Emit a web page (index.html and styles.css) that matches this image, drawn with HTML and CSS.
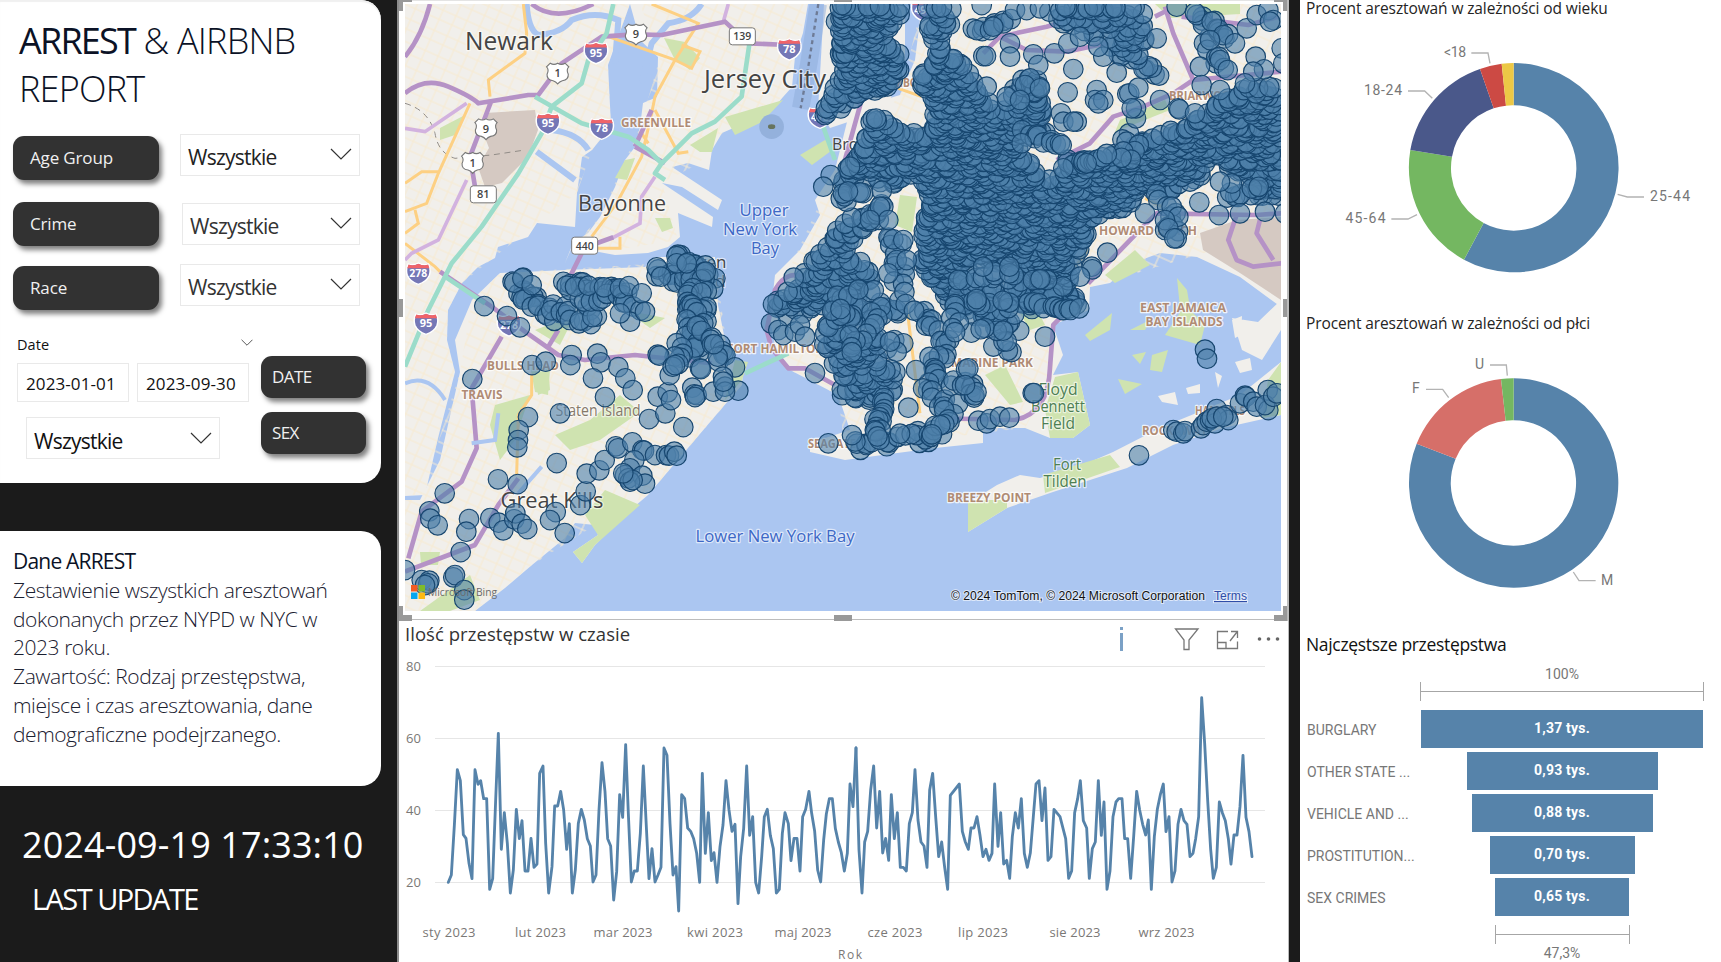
FILE: index.html
```html
<!DOCTYPE html>
<html lang="pl">
<head>
<meta charset="utf-8">
<title>Arrest &amp; Airbnb Report</title>
<link rel="stylesheet" href="styles.css">
</head>
<body>
<div class="report">
  <aside class="sidebar">
    <section class="card filters">
      <h1 class="title"><b>ARREST</b> &amp; AIRBNB<br>REPORT</h1>
      <div class="filter filter-age">
        <div class="tag">Age Group</div>
        <div class="select strong"><span>Wszystkie</span><svg class="chevron" viewBox="0 0 22 12"><path d="M1 1l10 10L21 1"/></svg></div>
      </div>
      <div class="filter filter-crime">
        <div class="tag">Crime</div>
        <div class="select"><span>Wszystkie</span><svg class="chevron" viewBox="0 0 22 12"><path d="M1 1l10 10L21 1"/></svg></div>
      </div>
      <div class="filter filter-race">
        <div class="tag">Race</div>
        <div class="select"><span>Wszystkie</span><svg class="chevron" viewBox="0 0 22 12"><path d="M1 1l10 10L21 1"/></svg></div>
      </div>
      <div class="bottom">
        <div class="dates">
          <div class="date-head"><span>Date</span><svg class="chevron small" viewBox="0 0 22 12"><path d="M1 1l10 10L21 1"/></svg></div>
          <div class="date-row"><div class="date">2023-01-01</div><div class="date">2023-09-30</div></div>
          <div class="select sex"><span>Wszystkie</span><svg class="chevron" viewBox="0 0 22 12"><path d="M1 1l10 10L21 1"/></svg></div>
        </div>
        <div class="tags"><div class="tag mini">DATE</div><div class="tag mini">SEX</div></div>
      </div>
    </section>
    <section class="card about">
      <p class="about-head">Dane ARREST</p>
      <p>Zestawienie wszystkich aresztowań</p>
      <p>dokonanych przez NYPD w NYC w</p>
      <p>2023 roku.</p>
      <p>Zawartość: Rodzaj przestępstwa,</p>
      <p>miejsce i czas aresztowania, dane</p>
      <p>demograficzne podejrzanego.</p>
    </section>
    <div class="stamp">2024-09-19 17:33:10</div>
    <div class="stamp-label">LAST UPDATE</div>
  </aside>

  <main class="center">
    <svg class="map" viewBox="399 0 889 621" width="889" height="621">
      <defs>
        <clipPath id="frame"><rect x="405" y="4" width="876" height="607"/></clipPath>
        <pattern id="streets" width="26" height="22" patternUnits="userSpaceOnUse" patternTransform="rotate(24)">
          <path d="M0 5H26M0 15H26M7 0V22M19 0V22" stroke="#f7ead0" stroke-width="1" fill="none"/>
        </pattern>
        <symbol id="inter" viewBox="0 0 26 26" overflow="visible">
          <path d="M2 3Q7 5 13 2Q19 5 24 3Q27 9 25 15Q22 22 13 25Q4 22 1 15Q-1 9 2 3Z" fill="#7477b6" stroke="#fff" stroke-width="1.6"/>
          <path d="M2.4 3.4Q7 5.4 13 2.6Q19 5.4 23.6 3.4L25 7.4H1Z" fill="#f06469"/>
        </symbol>
        <symbol id="usr" viewBox="0 0 26 26" overflow="visible">
          <path d="M5 2Q9 4.500 13 2Q17 4.500 21 2L25 6Q22 9 24.500 14Q25 20 18 21Q15 22 13 24.500Q11 22 8 21Q1 20 1.500 14Q4 9 1 6Z" fill="#fff" stroke="#777" stroke-width="1.200"/>
        </symbol>
      </defs>
      <rect x="399" y="0" width="889" height="621" fill="#fff"/>
      <g clip-path="url(#frame)">
        <rect x="405" y="4" width="876" height="607" fill="#abc6f1"/>
        <g id="land">
          <path d="M405 4H630L608 65L611 126L592 150L582 157L577 193L575 227L537 223L528 237L498 247L495 258L478 267L462 283L448 310L447 340L455 372L438 438L425 495L405 496Z"/>
          <path d="M630 4H808L803 33L795 57L792 87L783 97L772 110L745 123L722 133L712 150L709 170L688 163L672 167L722 200L718 210L682 187L662 183L713 217L712 227L678 213L680 237L668 247L648 253L615 255L572 247L565 263L573 243L588 233L600 217L615 187L625 160L635 147L640 127L643 103L657 97L658 57L640 40Z"/>
          <path d="M472 300L500 273L565 270L645 267L655 257L715 257L718 305L728 355L743 372L742 385L722 408L688 448L648 495L628 512L595 545L582 563L573 552L598 535L595 525L575 523L565 538L532 565L505 588L475 611H405V500H420L440 460L460 372L455 340Z"/>
          <path d="M824 4H905V60L890 100L860 118L830 128L818 110Z"/>
          <path d="M922 4H1281V307L1240 277L1197 257L1160 253L1133 263L1110 283L1090 287L1089 310L1053 325L1063 355L1053 375L1078 372L1090 425L1073 438H1050L1025 428H983V443L935 448L845 460L810 452V443L850 430L838 395L790 370L775 345L770 320L775 275L800 250L820 215L815 200L835 170L850 110L900 95L915 60Z"/>
          <path d="M1281 362L1240 395L1160 428L1113 452L1083 465L1040 478L1020 475L997 485L970 502L968 532L1007 508L1053 492L1127 468L1173 445L1223 428L1281 415Z"/>
          <path d="M1232 318L1258 322L1281 300V330L1262 360L1242 350ZM1235 362L1250 358L1252 370L1240 373ZM1215 372L1222 376L1218 388ZM1158 396L1175 392L1178 405L1162 402ZM1186 388L1200 384L1200 393L1188 394ZM1232 320L1242 316L1241 335L1235 338Z"/>
        </g>
        <g fill="url(#streets)">
          <path d="M405 4H630L608 65L611 126L592 150L577 193L537 223L462 283L448 310L447 340L455 372L438 438L425 495H405ZM640 4H808L783 97L712 140L700 163L662 183L678 240L615 250L572 247L600 217L640 127L660 57ZM472 300L500 273L715 260L728 355L742 385L648 495L595 525L532 565L475 611H405V500H420L460 372ZM922 4H1281V230L1090 287L1053 325L1053 375L1025 428L845 450L838 395L790 370L775 300L835 170L900 95Z"/>
        </g>
        <g fill="#cfe3b0">
          <path d="M725 117L783 100L762 122L735 135ZM690 145L718 128L712 152L700 152ZM664 38L685 42L700 58L690 70L674 58ZM800 155L825 140L835 148L812 165ZM625 160L635 158L627 180L615 178ZM440 128L465 115L455 135L440 140ZM655 218L670 218L673 228L662 232Z"/>
          <path d="M530 365L550 370L548 395L535 392ZM495 405L530 395L515 440L500 460L490 425ZM555 435L590 420L620 395L640 412L600 440L570 450ZM605 490L640 505L595 545L582 563L573 552L598 535L585 515ZM535 330L575 315L560 345ZM625 310L665 318L650 328ZM735 360L748 362L742 380L725 400ZM420 552L440 552L438 565H421ZM470 575L480 600L450 611H420ZM535 370L548 365L550 390L538 395Z"/>
          <path d="M900 195L917 197L912 232L895 225ZM1120 120L1165 100L1170 110L1115 132ZM1105 275L1135 250L1150 265L1115 283ZM1055 377L1078 372L1090 425L1073 438H1050L1045 410ZM1085 335L1112 313L1110 330L1090 341ZM1130 330L1150 320L1145 330ZM1132 355L1146 352L1140 364ZM1152 355L1168 350L1162 372L1150 370ZM1118 379L1142 384L1125 394ZM968 500L1007 500L1007 508L968 532ZM1043 475L1110 455L1120 467L1045 493ZM1155 4H1240V14L1170 18ZM1165 335L1185 305L1205 325L1200 345ZM985 375L1005 365L1023 402L1010 405ZM1268 380L1281 362V415L1262 418ZM1015 305H1035L1045 325L1030 330ZM1177 278L1187 290L1190 308H1180Z"/>
        </g>
        <path d="M485 113L535 110L538 130L528 157L502 183L485 187L478 167L489 148L482 130ZM1200 233L1237 220L1281 217V300L1240 273L1203 250Z" fill="#d5c9c2"/>
        <g transform="translate(395) scale(.3333)" fill="none">
          <path d="M425 455L540 540M470 390Q550 400 580 450M395 12Q400 90 430 105Q500 100 530 60Q600 30 670 60L660 190M920 12Q890 60 820 70L770 130L740 250" stroke="#abc6f1" stroke-width="18"/>
          <path d="M30 310Q100 330 120 400Q130 460 180 475L290 465L390 450" stroke="#918c87" stroke-width="3" stroke-dasharray="18 14"/>
          <path d="M1270 12L1240 200L1217 325" stroke="#8eabd9" stroke-width="52" opacity=".5"/>
          <path d="M1270 12L1240 200L1217 325" stroke="#6e7b96" stroke-width="7" stroke-dasharray="12 10"/>
          <circle cx="1130" cy="380" r="37" fill="#94b1dc"/><ellipse cx="1130" cy="380" rx="11" ry="7" fill="#67745e"/>
          <g stroke="#fdd083" stroke-width="9">
            <path d="M385 12L395 100L390 160L280 240L285 290M225 310L130 520L95 610L30 635M30 550L80 515L130 515M60 630L70 670L30 700M640 110L840 180L910 70L770 12M840 180L890 205L915 155L860 135M840 180L780 290L770 340L740 470L665 610L590 710M780 330L850 460L880 455M740 400L760 430M30 730L120 800L135 815M600 745H675V710"/>
            <path d="M410 1125V1185L370 1245L365 1425"/>
            <path d="M1535 915L1575 1240M1510 265L1580 290M2250 595L2300 620M2040 800L2080 750"/>
          </g>
          <g stroke="#d2b2df" stroke-width="11">
            <path d="M215 310L90 395L30 385M215 540L130 720L50 760L30 780M650 715L735 670L740 590L780 530M1000 12L985 65"/>
          </g>
          <g stroke="#b592c6" stroke-width="14" stroke-linejoin="round">
            <path d="M30 280Q90 230 160 260T250 310L400 285L430 285L500 190L620 110L720 103L800 105L990 65L1060 130L1180 135M410 12Q480 70 595 12M105 12Q80 110 30 170M290 300L225 470L240 560M605 730L655 712M560 760L525 830M135 815L290 920M720 440L810 490M720 440L770 330" />
            <path d="M320 1010L230 1165L245 1345L200 1445L80 1535L40 1675M30 1715L240 1635L310 1515L370 1435M390 995L490 1065L570 1080L720 1065L950 1090M460 1040L490 990M290 920L390 995"/>
            <path d="M1240 840Q1180 800 1140 870L1115 990L1130 1045L1180 1105L1230 1105L1320 1155"/>
            <path d="M1765 160L1815 110L1955 80L2165 20M1815 110L1895 150L2015 155L2135 130M2280 50L2320 30M2310 20L2335 100L2395 240L2660 215M1985 480L2085 430L2155 350L2245 320L2335 280L2395 240M2360 50L2560 75L2650 50M2080 850L2235 690L2285 640L2585 645L2660 640M2525 645L2500 720L2525 780L2575 800L2660 790M2595 660L2585 700L2635 780M2485 400L2515 530M2035 915L1975 975L1965 1105Q1960 1240 1860 1260L1635 1255M1400 300L1350 480"/>
          </g>
          <g stroke="#9bdcca" stroke-width="14" stroke-linejoin="round">
            <path d="M655 12L635 100L580 180L560 250L470 320L440 400L370 520L260 680L170 790L100 930L30 1100M420 290L560 370L700 410L760 450L800 490L780 520L810 540M800 490L890 400L960 365L1040 290L1065 120M1285 380L1320 480M1050 1120L1180 1060M150 830L270 910"/>
          </g>
          <path d="M30 1150Q100 1120 150 1200M230 1330L300 1320L310 1240M370 1480L440 1400" stroke="#abc6f1" stroke-width="12"/>
        </g>
        <g id="shields"></g>
        <g class="place" text-anchor="middle">
          <text x="509" y="50" font-size="25" textLength="88" lengthAdjust="spacingAndGlyphs">Newark</text>
          <text x="765" y="88" font-size="25" textLength="122" lengthAdjust="spacingAndGlyphs">Jersey City</text>
          <text x="622" y="211" font-size="22" textLength="88" lengthAdjust="spacingAndGlyphs">Bayonne</text>
          <text x="552" y="508" font-size="21.500" textLength="103" lengthAdjust="spacingAndGlyphs">Great Kills</text>
          <text x="701" y="268" font-size="17">Staten</text><text x="702" y="287" font-size="17">Island</text>
          <text x="865" y="150" font-size="17" textLength="66" lengthAdjust="spacingAndGlyphs">Brooklyn</text>
          <text x="598" y="416" font-size="15.500" fill="#85796b" textLength="85" lengthAdjust="spacingAndGlyphs">Staten Island</text>
          <g fill="#3d68c6" font-size="17">
            <text x="764" y="216" textLength="49" lengthAdjust="spacingAndGlyphs">Upper</text><text x="760" y="235" textLength="74" lengthAdjust="spacingAndGlyphs">New York</text><text x="765" y="254" textLength="28" lengthAdjust="spacingAndGlyphs">Bay</text>
            <text x="775" y="542" textLength="159" lengthAdjust="spacingAndGlyphs">Lower New York Bay</text>
          </g>
          <g fill="#4d7f54" font-size="16">
            <text x="1058" y="395" textLength="39" lengthAdjust="spacingAndGlyphs">Floyd</text><text x="1058" y="412" textLength="54" lengthAdjust="spacingAndGlyphs">Bennett</text><text x="1058" y="429" textLength="34" lengthAdjust="spacingAndGlyphs">Field</text>
            <text x="1067" y="470" textLength="28" lengthAdjust="spacingAndGlyphs">Fort</text><text x="1065" y="487" textLength="43" lengthAdjust="spacingAndGlyphs">Tilden</text>
          </g>
          <g class="district" font-size="12.500">
            <text x="656" y="127" textLength="70" lengthAdjust="spacingAndGlyphs">GREENVILLE</text>
            <text x="523" y="370" textLength="72" lengthAdjust="spacingAndGlyphs">BULLS HEAD</text>
            <text x="482" y="399" textLength="41" lengthAdjust="spacingAndGlyphs">TRAVIS</text>
            <text x="776" y="353" textLength="98" lengthAdjust="spacingAndGlyphs">FORT HAMILTON</text>
            <text x="832" y="448" textLength="48" lengthAdjust="spacingAndGlyphs">SEAGATE</text>
            <text x="1148" y="235" textLength="98" lengthAdjust="spacingAndGlyphs">HOWARD BEACH</text>
            <text x="1183" y="312" textLength="86" lengthAdjust="spacingAndGlyphs">EAST JAMAICA</text>
            <text x="1184" y="326" textLength="77" lengthAdjust="spacingAndGlyphs">BAY ISLANDS</text>
            <text x="992" y="367" textLength="82" lengthAdjust="spacingAndGlyphs">MARINE PARK</text>
            <text x="989" y="502" textLength="84" lengthAdjust="spacingAndGlyphs">BREEZY POINT</text>
            <text x="1175" y="435" textLength="66" lengthAdjust="spacingAndGlyphs">ROCKAWAY</text>
            <text x="1220" y="415" textLength="50" lengthAdjust="spacingAndGlyphs">HAMMELS</text>
            <text x="1204" y="100" textLength="70" lengthAdjust="spacingAndGlyphs">BRIARWOOD</text>
            <text x="898" y="87" textLength="40" lengthAdjust="spacingAndGlyphs">DUMBO</text>
          </g>
        </g>
        <g id="dots" class="dots"></g>
        <g>
          <path fill="#f25b22" d="M411 585h6.500v6.500h-6.500z"/><path fill="#80bb2a" d="M418.500 585h6.500v6.500h-6.500z"/><path fill="#05a6ee" d="M411 592.500h6.500v6.500h-6.500z"/><path fill="#fdb912" d="M418.500 592.500h6.500v6.500h-6.500z"/>
          <text class="bing" x="428" y="596" font-size="11.500" textLength="69" lengthAdjust="spacingAndGlyphs">Microsoft Bing</text>
          <g class="credit"><text x="951" y="600" textLength="254" lengthAdjust="spacingAndGlyphs">© 2024 TomTom, © 2024 Microsoft Corporation</text>
          <text class="terms" x="1214" y="600" textLength="33" lengthAdjust="spacingAndGlyphs">Terms</text></g>
        </g>
      </g>
      <path d="M399 0H1288" stroke="#e4e4e4" stroke-width="2"/>
      <path d="M399 619.500H1288M1287.500 0V621" stroke="#bdbdbd" stroke-width="1" fill="none"/>
      <g fill="#999">
        <path d="M399 0h13v2h-9v9h-4zM1274 0h13v11h-4V2h-9zM399 606h4v9h9v6h-13zM1287 606h-4v9h-9v6h13zM834 0h18v2h-18zM834 615h18v6h-18zM399 299h4v18h-4zM1283 299h4v18h-4z"/>
      </g>
    </svg>
    <section class="trend">
      <header class="trend-head">
        <h2>Ilość przestępstw w czasie</h2>
        <svg class="tools" viewBox="1110 625 175 32" width="175" height="32" fill="none">
          <path d="M1120 627h3v3h-3zM1120 633h3v18h-3z" fill="#7ba1c6"/>
          <g stroke="#777" stroke-width="1.300">
            <path d="M1175.500 629H1198L1189 640V649.500H1184V640Z"/>
            <path d="M1228 631.500H1217.500V648.500H1237.500V641.500M1217.500 642.500H1226V648.500M1230 641L1237 632M1231 631.500H1237.500V638"/>
          </g>
          <g fill="#666"><circle cx="1259.500" cy="639" r="1.800"/><circle cx="1268.500" cy="639" r="1.800"/><circle cx="1277.500" cy="639" r="1.800"/></g>
        </svg>
      </header>
      <svg class="plot" viewBox="399 657 889 305" width="889" height="305">
        <path d="M435 666.500H1265M435 738.500H1265M435 810.500H1265M435 882.500H1265" stroke="#e6e6e6"/>
        <g class="axis">
          <text x="406" y="671">80</text><text x="406" y="743">60</text><text x="406" y="815">40</text><text x="406" y="887">20</text>
          <g text-anchor="middle">
            <text x="449" y="937" textLength="53">sty 2023</text><text x="540.500" y="937" textLength="51">lut 2023</text><text x="623" y="937" textLength="59">mar 2023</text><text x="715" y="937" textLength="56">kwi 2023</text><text x="803" y="937" textLength="57">maj 2023</text><text x="895" y="937" textLength="55">cze 2023</text><text x="983" y="937" textLength="50">lip 2023</text><text x="1075" y="937" textLength="51">sie 2023</text><text x="1166.500" y="937" textLength="56">wrz 2023</text><text x="850" y="958.500" font-size="12" textLength="24">Rok</text>
          </g>
        </g>
        <g transform="translate(395 610) scale(.33333)" fill="none" stroke="#5683aa" stroke-width="8.500" stroke-linejoin="round" stroke-linecap="round">
          <polyline points="160,817 169,795 178,647 187,479 196,512 205,674 213,685 222,760 231,806 240,479 249,523 257,512 266,566 275,566 284,838 293,806 302,570 310,370 319,718 328,608 337,700 346,849 355,780 364,598 373,686 381,632 390,783 399,783 408,685 417,772 426,762 434,490 444,468 452,700 461,849 471,770 479,588 488,588 497,544 506,600 515,718 523,641 532,849 541,780 550,640 559,598 568,630 577,686 586,708 594,816 603,795 612,600 621,458 630,545 638,686 647,708 656,870 665,785 674,554 683,622 692,404 700,610 709,816 718,783 727,783 736,670 745,468 754,650 762,806 771,716 780,816 789,795 798,772 807,414 816,436 825,640 834,795 843,770 851,903 860,554 869,566 878,654 887,664 896,686 905,730 914,817 922,490 931,730 940,608 949,752 957,728 966,817 975,710 984,645 993,512 1002,600 1011,664 1020,643 1029,881 1037,740 1046,655 1055,468 1064,676 1073,620 1082,817 1091,849 1100,740 1108,620 1117,598 1126,676 1135,716 1144,849 1153,838 1162,670 1170,608 1180,641 1188,752 1197,685 1206,685 1215,783 1223,620 1232,598 1242,544 1250,610 1259,664 1268,780 1277,816 1286,690 1294,612 1303,566 1312,566 1321,655 1330,696 1339,728 1348,783 1357,730 1365,522 1374,590 1383,414"/>
          <polyline transform="translate(1365)" points="18,414 27,720 36,849 44,696 53,664 62,540 71,468 80,654 89,544 98,729 107,685 116,751 124,554 133,686 142,608 151,772 160,772 169,783 178,641 187,608 195,479 204,630 213,696 222,708 231,772 239,540 248,490 257,620 266,740 275,696 284,772 293,838 301,556 328,522 337,664 346,696 355,718 363,654 372,654 381,620 390,676 399,740 408,718 417,751 426,730 434,522 444,709 452,608 461,762 470,751 479,805 487,680 496,608 505,654 514,566 523,730 532,772 541,729 550,620 558,522 567,512 576,632 585,534 594,751 603,740 612,598 630,620 647,686 656,805 665,783 674,608 683,566 691,512 700,632 710,654 718,805 727,716 736,696 745,512 754,676 762,576 771,838 780,783 789,620 798,576 806,566 816,566 824,686 833,686 842,805 851,680 860,544 869,600 878,643 887,675 895,630 904,838 913,680 922,598 931,554 940,522 948,665 957,620 966,816 975,783 984,643 993,598 1002,632 1011,643 1020,740 1029,730 1037,686 1046,620 1055,263 1064,400 1073,570 1082,718 1090,805 1099,772 1108,576 1117,608 1126,632 1135,686 1143,762 1152,675 1161,675 1170,590 1179,436 1188,622 1197,665 1206,740"/>
        </g>
      </svg>
    </section>
  </main>

  <aside class="right">
    <section class="age">
      <h3>Procent aresztowań w zależności od wieku</h3>
      <svg viewBox="1300 20 421 290" width="421" height="290">
        <g transform="translate(1290) scale(.33333)">
          <path d="M671 189A314 314 0 1 1 522 779L581 669A188 188 0 1 0 671 316Z" fill="#5683aa"/>
          <path d="M522 779A314 314 0 0 1 361 450L486 470A188 188 0 0 0 581 669Z" fill="#74b761"/>
          <path d="M361 450A314 314 0 0 1 570 207L611 325A188 188 0 0 0 486 470Z" fill="#4a588a"/>
          <path d="M570 207A314 314 0 0 1 635 191L648 317A188 188 0 0 0 611 325Z" fill="#cc4a44"/>
          <path d="M635 191A314 314 0 0 1 671 189V316A188 188 0 0 0 648 317Z" fill="#ecc846"/>
          <path class="leader" d="M544 159H594L600 190M354 273H404L427 295M304 657H354L381 644M983 583L1012 591H1062"/>
        </g>
        <g class="din"><text x="1444" y="57" textLength="22">&lt;18</text><text x="1364" y="95" textLength="38">18-24</text><text x="1345.500" y="223" textLength="40">45-64</text><text x="1650" y="201" textLength="40">25-44</text></g>
      </svg>
    </section>
    <section class="gender">
      <h3>Procent aresztowań w zależności od płci</h3>
      <svg viewBox="1300 336 421 290" width="421" height="290">
        <g transform="translate(1290 310) scale(.33333)">
          <path d="M671 205A314 314 0 1 1 380 401L497 446A188 188 0 1 0 671 331Z" fill="#5683aa"/>
          <path d="M380 401A314 314 0 0 1 633 207L647 332A188 188 0 0 0 497 446Z" fill="#d66f69"/>
          <path d="M633 207A314 314 0 0 1 671 205V331A188 188 0 0 0 647 332Z" fill="#74b761"/>
          <path class="leader" d="M600 165H649L652 197M408 238H458L476 263M850 786L867 812H917"/>
        </g>
        <g class="din"><text x="1475" y="369">U</text><text x="1412" y="393">F</text><text x="1601" y="585">M</text></g>
      </svg>
    </section>
    <section class="crimes">
      <h3>Najczęstsze przestępstwa</h3>
      <div class="funnel">
        <div class="limit">100%</div>
        <div class="span wide"></div>
        <div class="row"><span class="name">BURGLARY</span><div class="track"><div class="bar" style="width:282px">1,37 tys.</div></div></div>
        <div class="row"><span class="name">OTHER STATE ...</span><div class="track"><div class="bar" style="width:191px">0,93 tys.</div></div></div>
        <div class="row"><span class="name">VEHICLE AND ...</span><div class="track"><div class="bar" style="width:181px">0,88 tys.</div></div></div>
        <div class="row"><span class="name">PROSTITUTION...</span><div class="track"><div class="bar" style="width:145px">0,70 tys.</div></div></div>
        <div class="row"><span class="name">SEX CRIMES</span><div class="track"><div class="bar" style="width:134px">0,65 tys.</div></div></div>
        <div class="span narrow"></div>
        <div class="limit low">47,3%</div>
      </div>
    </section>
  </aside>
</div>
<script src="map.js"></script>
</body>
</html>
```
FILE: styles.css
```css
* { box-sizing: border-box; }
body { margin: 0; background: #1b1b1b; font-family: "Open Sans", "Noto Sans", sans-serif; color: #252423; overflow: hidden; }
h1, h2, h3, p { margin: 0; font-weight: inherit; }
svg { display: block; flex: none; }
.report { display: grid; grid-template-columns: 397px 892px 432px; width: 1721px; height: 962px; }
.right { width: 421px; margin-left: 11px; background: #fff; }

.sidebar { display: flex; flex-direction: column; }
.card { width: 381px; background: #fff; border-radius: 0 20px 20px 0; }
.filters { height: 483px; padding-top: 17px; box-shadow: inset 0 2px 1px #f0f0f0; }
.title { margin-left: 19px; font-size: 36px; line-height: 48px; font-weight: 300; color: #0b1226; letter-spacing: -.8px; white-space: nowrap; }
.title b { font-weight: 500; letter-spacing: -1.8px; }
.filter { display: flex; align-items: flex-start; padding-left: 13px; }
.filter-age { margin-top: 21px; height: 67px; }
.filter-age .tag { margin-top: 2px; }
.filter-crime { height: 64px; }
.filter-race { height: 70px; }
.filter-race .select { margin-top: -1px; }
.tag { width: 146px; height: 44px; margin-top: 1px; padding-left: 17px; border-radius: 11px; background: #323232; color: #f0f0f0; font-size: 17px; line-height: 43px; font-weight: 400; letter-spacing: -.15px; box-shadow: 3px 4px 5px rgba(0,0,0,.5); }
.select { display: flex; align-items: center; justify-content: space-between; width: 180px; height: 42px; margin-left: 21px; padding: 4px 7px 0 7px; border: 1px solid #e9e9e9; font-size: 21px; line-height: 30px; letter-spacing: -.75px; color: #333; }
.filter-crime .select { width: 178px; margin: 2px 0 0 23px; }
.strong { color: #222; }
.chevron { width: 22px; height: 12px; margin-top: -7px; fill: none; stroke: #333; stroke-width: 1.2; }
.chevron.small { width: 12px; height: 7px; stroke-width: 1.5; }
.bottom { display: flex; padding-left: 17px; }
.dates { width: 232px; }
.date-head { display: flex; justify-content: space-between; width: 236px; height: 28px; font-size: 14.5px; line-height: 19px; letter-spacing: .1px; color: #111; }
.date-head .chevron { margin-top: 4px; }
.date-row { display: flex; gap: 8px; }
.date { width: 112px; height: 39px; padding-left: 8px; border: 1px solid #e9e9e9; font-size: 17px; line-height: 39px; letter-spacing: .1px; color: #111; }
.select.sex { width: 194px; margin: 15px 0 0 9px; padding-top: 6px; color: #111; }
.tags { margin: 21px 0 0 12px; }
.mini { width: 105px; height: 42px; margin: 0 0 14px; padding-left: 11px; line-height: 41px; letter-spacing: -.6px; }

.about { height: 255px; margin-top: 48px; padding: 16px 0 0 13px; font-size: 21px; line-height: 28.8px; font-weight: 300; letter-spacing: -.45px; color: #1a2030; white-space: nowrap; }
.about-head { font-weight: 500; letter-spacing: -.8px; color: #0b1226; }
.stamp { margin: 34px 0 0 22px; color: #fff; font-size: 36px; line-height: 50px; letter-spacing: .1px; white-space: nowrap; }
.stamp-label { margin: 8px 0 0 32px; color: #fff; font-size: 29px; line-height: 42px; font-weight: 500; letter-spacing: -1.55px; }

.center { width: 892px; background: #fff; border-left: 2px solid #8c8c8c; border-right: 1px solid #bbb; }
#land { fill: #f1efeb; }
.place { fill: #444; paint-order: stroke; stroke: rgba(255,255,255,.6); stroke-width: 2.5px; stroke-linejoin: round; }
.district { fill: #b08b74; font-weight: 700; stroke: rgba(255,255,255,.8); }
.dots circle { fill: #4f80aa; fill-opacity: .6; stroke: #17466f; stroke-width: 1.15; }
.shield-i { fill: #fff; font-weight: 700; font-size: 11px; text-anchor: middle; }
.shield-u { fill: #444; font-weight: 600; font-size: 11px; text-anchor: middle; }
.bing { fill: #6b6b6b; }
.credit { font-family: "Liberation Sans", Arial, sans-serif; font-size: 12px; fill: #111; paint-order: stroke; stroke: rgba(255,255,255,.6); stroke-width: 2px; }
.terms { fill: #2f4da8; text-decoration: underline; }
.trend-head { display: flex; justify-content: space-between; height: 36px; padding: 4px 3px 0 6px; }
.trend-head h2 { margin-top: -1px; font-size: 18.5px; line-height: 20px; letter-spacing: .05px; color: #333; white-space: nowrap; }
.axis { font-size: 13px; fill: #7a7876; }

.right h3 { padding-left: 6px; font-size: 15.5px; line-height: 20px; letter-spacing: -.11px; white-space: nowrap; }
.age { display: flow-root; height: 316px; }
.age h3 { margin-top: -2px; height: 22px; }
.gender { height: 320px; }
.gender h3 { height: 20px; margin-top: -3px; }
.gender svg { margin-top: 3px; }
.leader { fill: none; stroke: #b3b3b3; stroke-width: 4; }
.din { font-family: Roboto, sans-serif; font-size: 14px; fill: #777; }
.crimes .funnel { margin-top: 10px; }
.crimes h3 { font-size: 17.5px; line-height: 22px; letter-spacing: -.32px; color: #111; }
.funnel { font-family: Roboto, sans-serif; font-size: 14px; color: #777; }
.limit { width: 282px; height: 21px; margin-left: 121px; text-align: center; line-height: 18px; }
.span { height: 19px; margin-left: 120px; width: 284px; border: solid #a6a6a6; border-width: 0 1px; background: linear-gradient(#a6a6a6, #a6a6a6) 0 9px / 100% 1px no-repeat; }
.span.wide { margin-bottom: 9px; margin-top: -4px; }
.span.narrow { width: 135px; margin: 5px 0 0 195px; }
.row { display: flex; height: 42px; }
.name { width: 121px; padding-left: 7px; line-height: 40px; letter-spacing: 0; white-space: nowrap; }
.track { display: flex; justify-content: center; width: 282px; }
.bar { height: 38px; background: #5683aa; color: #fff; font-weight: 700; text-align: center; line-height: 36px; letter-spacing: .2px; }
.limit.low { margin-top: 0; line-height: 19px; }
```
FILE: map.js
```js
(function () {
  var NS = 'http://www.w3.org/2000/svg';
  var layer = document.getElementById('dots');
  var seed = 20230901;
  function rnd() { seed = (seed * 1664525 + 1013904223) % 4294967296; return seed / 4294967296; }

  // Tile origins on the canvas; each tile stores points at three units per pixel.
  var tiles = { A: [395, 0], B: [395, 305], C: [840, 0], D: [840, 305] };
  var frag = document.createDocumentFragment();
  function dot(x, y) {
    var c = document.createElementNS(NS, 'circle');
    c.setAttribute('cx', x.toFixed(1)); c.setAttribute('cy', y.toFixed(1)); c.setAttribute('r', 9.8);
    frag.appendChild(c);
  }
  function parse(s) { return s.split(' ').map(function (p) { return p.split(',').map(Number); }); }
  function put(tile, p) { dot(tiles[tile][0] + p[0] / 3, tiles[tile][1] + p[1] / 3); }
  function inside(poly, x, y) {
    var r = false;
    for (var i = 0, j = poly.length - 1; i < poly.length; j = i++) {
      var a = poly[i], b = poly[j];
      if ((a[1] > y) !== (b[1] > y) && x < (b[0] - a[0]) * (y - a[1]) / (b[1] - a[1]) + a[0]) r = !r;
    }
    return r;
  }
  function area(tile, s, step) {
    var poly = parse(s), xs = poly.map(function (p) { return p[0]; }), ys = poly.map(function (p) { return p[1]; });
    var x1 = Math.max.apply(0, xs), y1 = Math.max.apply(0, ys), pts = [];
    for (var y = Math.min.apply(0, ys); y <= y1; y += step)
      for (var x = Math.min.apply(0, xs); x <= x1; x += step) {
        var px = x + (rnd() - .5) * step * 1.6, py = y + (rnd() - .5) * step * 1.6;
        if (inside(poly, px, py)) pts.push([px, py, py + rnd() * 16]);
      }
    pts.sort(function (a, b) { return b[2] - a[2]; });
    pts.forEach(function (p) { put(tile, p); });
  }
  function chain(tile, s, spread, step) {
    var pts = parse(s);
    for (var i = 1; i < pts.length; i++) {
      var a = pts[i - 1], b = pts[i], len = Math.hypot(b[0] - a[0], b[1] - a[1]), n = Math.max(1, Math.round(len / step));
      for (var k = 0; k < n; k++) {
        var t = k / n;
        put(tile, [a[0] + (b[0] - a[0]) * t + (rnd() - .5) * 2 * spread, a[1] + (b[1] - a[1]) * t + (rnd() - .5) * 2 * spread]);
      }
    }
  }
  function singles(tile, s) { parse(s).forEach(function (p) { put(tile, p); }); }

  // Manhattan, Brooklyn and Queens
  area('C', '-15,15 200,15 185,60 120,120 180,150 190,210 130,280 60,285 -20,345 -50,350 -55,320 -10,250 5,190 -10,110', 17);
  area('C', '260,15 335,15 335,70 300,120 330,170 395,210 400,250 470,330 540,310 560,240 610,260 605,360 620,400 560,410 520,425 560,480 600,520 640,540 700,500 790,470 830,455 845,500 880,430 960,400 1060,370 1120,320 1200,260 1320,260 1330,590 1250,590 1200,520 1110,470 1080,530 1000,570 920,570 870,620 760,650 750,700 700,780 690,860 715,915 600,930 560,880 520,800 400,770 340,930 270,840 240,780 250,680 270,600 240,520 150,555 60,530 0,560 20,500 80,430 75,350 140,350 210,400 270,390 290,320 240,270 250,210 300,180 270,120', 17);
  area('C', '600,15 910,15 920,120 900,190 960,210 1040,265 960,235 850,185 790,130 700,90 630,60', 22);
  area('C', '0,680 60,620 130,610 130,660 40,700 40,760 100,810 115,860 30,900 -60,930 -110,960 -170,960 -200,910 -130,850', 20);
  area('C', '340,800 540,790 690,860 700,930 340,930', 28);
  area('C', '0,860 110,870 150,930 60,980 -30,940', 28);
  area('C', '0,540 60,560 160,550 120,580 40,620 0,600', 25);
  area('C', '1130,540 1320,560 1320,600 1230,610 1180,625', 28);
  area('D', '-40,20 40,0 60,90 130,100 170,200 170,270 110,300 0,270 -20,200 -50,110', 22);
  area('D', '350,-20 530,-20 540,80 480,90 360,20', 22);
  area('D', '400,60 540,70 530,140 470,165 450,100 390,90', 29);
  area('D', '10,400 110,400 290,350 310,385 260,425 110,440 40,440', 24);
  chain('D', '140,290 110,350 120,410', 12, 8);
  chain('D', '170,10 110,40 30,130', 25, 12);
  chain('D', '240,10 270,80 320,130 270,170 300,210 260,250 280,280 340,310 300,360 260,400', 18, 13);
  chain('D', '340,240 390,230 400,270 430,275', 12, 12);
  chain('D', '570,-10 650,5 720,5', 12, 11);
  chain('D', '330,-10 360,90', 15, 14);
  chain('C', '1110,130 1145,190 1170,210', 28, 13);
  chain('C', '1080,45 1120,80 1180,120', 14, 15);
  chain('C', '400,90 490,70 525,35', 10, 20);
  chain('C', '500,290 560,240 620,270', 18, 14);
  chain('C', '560,400 660,430', 14, 12);
  chain('C', '150,700 180,780 180,870 240,930', 22, 18);
  chain('C', '960,590 990,650 985,690 1015,715', 18, 16);
  chain('C', '860,420 880,450 840,500', 20, 12);
  chain('C', '680,480 740,490 800,460', 12, 9);

  // Staten Island and the Rockaways
  chain('A', '365,848 400,860 400,900 480,940 560,955 600,925', 26, 9);
  chain('A', '510,857 590,860 700,875', 14, 12);
  chain('A', '560,890 640,890 740,930', 18, 16);
  chain('A', '785,815 850,850 900,870', 15, 12);
  chain('A', '850,795 930,830 900,880 910,960 890,1030 860,1070', 34, 5);
  chain('A', '910,980 970,1040 990,1090', 15, 13);
  chain('A', '865,1060 830,1100', 12, 12);
  singles('A', '358,848 382,835 410,855 515,857 540,860 580,857 627,862 675,865 702,858 740,880 785,802 798,830 845,790 875,790 932,815 268,918 1196,833 1134,913 1307,525 1285,560');
  singles('B', '336,33 375,67 411,180 452,170 530,150 526,180 607,146 617,172 594,220 670,186 691,220 630,276 713,255 495,325 399,336 371,375 369,405 367,427 485,474 309,523 368,537 149,565 103,619 106,641 128,661 222,642 214,680 286,639 311,653 325,676 358,643 361,625 380,656 397,672 482,621 465,645 509,684 556,600 572,559 575,506 613,496 629,465 662,424 669,430 712,412 742,435 747,437 780,450 813,450 822,452 838,440 845,452 718,466 705,490 690,510 700,520 742,512 750,536 705,530 713,525 685,505 762,342 811,325 865,366 788,275 818,262 828,285 788,149 793,152 824,210 833,185 840,180 915,190 918,192 892,248 898,268 905,270 900,276 955,260 1020,187 1030,257 984,215 990,245 990,260 985,230 968,155 957,117 197,741 175,817 180,810 208,855 208,884 80,825 103,827 100,835 90,840 30,795 705,50 750,20 675,25 1128,55 1150,75 1165,90 1200,80 1215,60 1230,95 1260,204 1300,415 232,222');
  singles('C', '410,90 450,90 490,70 525,30 430,168 438,168 510,130 510,170 580,163 595,195 643,160 700,207 683,277 770,270 765,300 790,300 775,310 862,282 868,280 895,263 888,355 888,325 875,325 960,300 1015,325 1018,328 830,218 790,170 775,140 950,115 1010,20 1070,45 1065,38 1115,65 1150,105 1110,120 1185,130 1140,180 1163,210 1080,200 1220,85 1250,45 1285,30 1300,60 1290,65 1247,170 1272,208 1240,215 1325,145 1330,190 1085,255 1140,270 1065,340 1215,250 663,340 670,365 710,365 700,365 660,430 665,435 570,235 555,255 600,265 500,290 540,300 1078,607 1137,645 1200,640 1275,635 1335,640 1140,545 995,620 1015,650 975,660 985,685 1010,715 1003,715 915,640 802,758 755,800 757,808 720,830 160,718 190,720 170,780 200,780 145,820 130,620 120,620 145,660 90,660 30,500 440,260 460,80 545,430 740,490 670,505 425,15 560,30 600,25 685,130 720,110');
  singles('D', '615,95 578,264 582,264 1095,134 1101,161 897,451 1000,375 1010,380 1030,385 1035,378 1083,370 1090,360 1100,350 1110,345 1130,312 1125,355 1160,330 1165,345 1200,295 1215,272 1218,275 1240,290 1250,305 1283,255 1285,315 1275,300 1300,275 1310,265 1115,340 1130,335 1150,335 415,347 440,355 450,342 480,335 508,338 378,193 385,190 228,195 205,308 375,240 36,390 163,105 190,115 170,140 150,110');
  layer.appendChild(frag);

  // Route shields: [tile, x, y, label, kind]
  var shields = document.getElementById('shields');
  [['A', 603, 158, '95', 'i'], ['A', 1183, 147, '78', 'i'], ['A', 459, 370, '95', 'i'], ['A', 620, 385, '78', 'i'], ['A', 70, 820, '278', 'i'],
   ['B', 93, 55, '95', 'i'], ['B', 342, 60, '278', 'i'], ['A', 1275, 352, '478', 'i'], ['C', 250, 30, '495', 'i'],
   ['A', 723, 103, '9', 'u'], ['A', 488, 220, '1', 'u'], ['A', 273, 387, '9', 'u'], ['A', 233, 488, '1', 'u'],
   ['A', 1042, 109, '139', 'r'], ['A', 265, 583, '81', 'r'], ['A', 569, 737, '440', 'r'], ['C', 162, 728, '27', 'r']].forEach(function (s) {
    var x = tiles[s[0]][0] + s[1] / 3, y = tiles[s[0]][1] + s[2] / 3, m;
    if (s[4] === 'r') {
      m = document.createElementNS(NS, 'rect');
      m.setAttribute('x', x - 13); m.setAttribute('y', y - 8.5); m.setAttribute('width', 26); m.setAttribute('height', 17);
      m.setAttribute('rx', 3); m.setAttribute('fill', '#fff'); m.setAttribute('stroke', '#777');
    } else {
      m = document.createElementNS(NS, 'use');
      m.setAttribute('href', s[4] === 'i' ? '#inter' : '#usr');
      m.setAttribute('x', x - 12); m.setAttribute('y', y - 12); m.setAttribute('width', 24); m.setAttribute('height', 24);
    }
    shields.appendChild(m);
    var t = document.createElementNS(NS, 'text');
    t.setAttribute('x', x); t.setAttribute('y', y + 4); t.setAttribute('class', s[4] === 'i' ? 'shield-i' : 'shield-u');
    if (s[3].length > 2) { t.setAttribute('textLength', 18); t.setAttribute('lengthAdjust', 'spacingAndGlyphs'); }
    t.textContent = s[3];
    shields.appendChild(t);
  });
})();
```
